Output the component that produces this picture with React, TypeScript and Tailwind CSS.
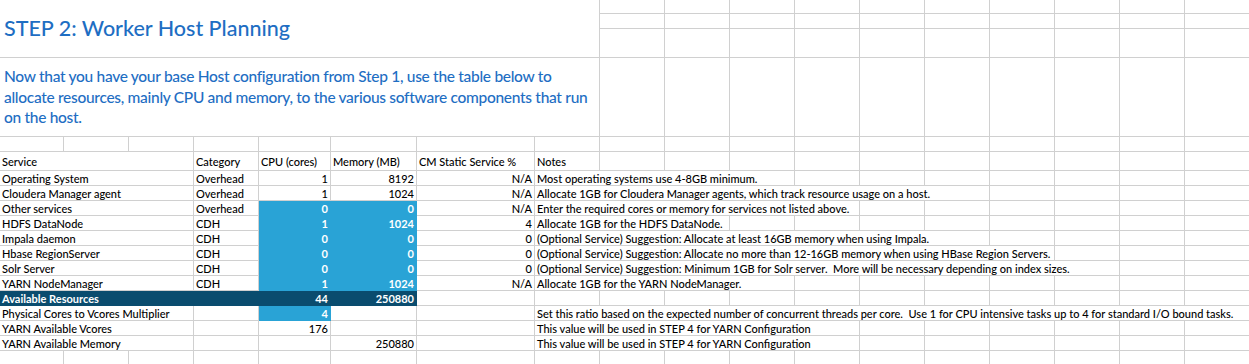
import React from "react";

const GRID = "border-[#d0d0d0]";
const FONT = { fontFamily: "Lato, 'Open Sans', sans-serif" };

const SPAN: Record<number, string> = {
  1: "col-span-1",
  2: "col-span-2",
  3: "col-span-3",
  4: "col-span-4",
  5: "col-span-5",
  6: "col-span-6",
  7: "col-span-7",
  8: "col-span-8",
  9: "col-span-9",
  10: "col-span-10",
  11: "col-span-11",
  12: "col-span-12",
};

type Cell = {
  span?: number;
  text?: string;
  right?: boolean;
  fill?: "blue" | "dark";
};

const TOTAL = 18;

function fillRow(cells: Cell[]): Cell[] {
  const used = cells.reduce((s, c) => s + (c.span ?? 1), 0);
  const out = [...cells];
  for (let i = used; i < TOTAL; i++) out.push({});
  return out;
}

type Row = { cells: Cell[] };

const b = (text: string): Cell => ({ text, right: true, fill: "blue" });

const rows: Row[] = [
  { cells: [{}, {}, {}] },
  {
    cells: [
      { span: 3, text: "Service" },
      { text: "Category" },
      { text: "CPU (cores)" },
      { text: "Memory (MB)" },
      { text: "CM Static Service %" },
      { text: "Notes" },
    ],
  },
  {
    cells: [
      { span: 3, text: "Operating System" },
      { text: "Overhead" },
      { text: "1", right: true },
      { text: "8192", right: true },
      { text: "N/A", right: true },
      { span: 4, text: "Most operating systems use 4-8GB minimum." },
    ],
  },
  {
    cells: [
      { span: 3, text: "Cloudera Manager agent" },
      { text: "Overhead" },
      { text: "1", right: true },
      { text: "1024", right: true },
      { text: "N/A", right: true },
      { span: 7, text: "Allocate 1GB for Cloudera Manager agents, which track resource usage on a host." },
    ],
  },
  {
    cells: [
      { span: 3, text: "Other services" },
      { text: "Overhead" },
      b("0"),
      b("0"),
      { text: "N/A", right: true },
      { span: 5, text: "Enter the required cores or memory for services not listed above." },
    ],
  },
  {
    cells: [
      { span: 3, text: "HDFS DataNode" },
      { text: "CDH" },
      b("1"),
      b("1024"),
      { text: "4", right: true },
      { span: 3, text: "Allocate 1GB for the HDFS DataNode." },
    ],
  },
  {
    cells: [
      { span: 3, text: "Impala daemon" },
      { text: "CDH" },
      b("0"),
      b("0"),
      { text: "0", right: true },
      { span: 7, text: "(Optional Service) Suggestion: Allocate at least 16GB memory when using Impala." },
    ],
  },
  {
    cells: [
      { span: 3, text: "Hbase RegionServer" },
      { text: "CDH" },
      b("0"),
      b("0"),
      { text: "0", right: true },
      { span: 8, text: "(Optional Service) Suggestion: Allocate no more than 12-16GB memory when using HBase Region Servers." },
    ],
  },
  {
    cells: [
      { span: 3, text: "Solr Server" },
      { text: "CDH" },
      b("0"),
      b("0"),
      { text: "0", right: true },
      { span: 9, text: "(Optional Service) Suggestion: Minimum 1GB for Solr server.  More will be necessary depending on index sizes." },
    ],
  },
  {
    cells: [
      { span: 3, text: "YARN NodeManager" },
      { text: "CDH" },
      b("1"),
      b("1024"),
      { text: "N/A", right: true },
      { span: 4, text: "Allocate 1GB for the YARN NodeManager." },
    ],
  },
  {
    cells: [
      { span: 4, text: "Available Resources", fill: "dark" },
      { text: "44", right: true, fill: "dark" },
      { text: "250880", right: true, fill: "dark" },
      {},
    ],
  },
  {
    cells: [
      { span: 3, text: "Physical Cores to Vcores Multiplier" },
      {},
      b("4"),
      {},
      {},
      { span: 11, text: "Set this ratio based on the expected number of concurrent threads per core.  Use 1 for CPU intensive tasks up to 4 for standard I/O bound tasks." },
    ],
  },
  {
    cells: [
      { span: 3, text: "YARN Available Vcores" },
      {},
      { text: "176", right: true },
      {},
      {},
      { span: 5, text: "This value will be used in STEP 4 for YARN Configuration" },
    ],
  },
  {
    cells: [
      { span: 3, text: "YARN Available Memory" },
      {},
      {},
      { text: "250880", right: true },
      {},
      { span: 5, text: "This value will be used in STEP 4 for YARN Configuration" },
    ],
  },
  { cells: [] },
];

function CellView({ c }: { c: Cell }) {
  const fillCls =
    c.fill === "blue"
      ? "bg-[#29a3d6] border-transparent text-white font-bold"
      : c.fill === "dark"
      ? "bg-[#0a4c6e] border-transparent text-white font-bold"
      : `bg-white ${GRID} text-black font-medium`;
  return (
    <div
      className={`${SPAN[c.span ?? 1]} ${fillCls} border-r border-b flex items-center whitespace-pre overflow-visible px-[2px] ${
        c.right ? "justify-end" : "justify-start"
      }`}
    >
      <span>{c.text ?? ""}</span>
    </div>
  );
}

export default function App() {
  return (
    <div className="w-[1249px] h-[364px] overflow-hidden bg-white" style={FONT}>
      {/* top area */}
      <div className="flex">
        <div className="w-[600px] flex flex-col shrink-0">
          <div className={`h-[58px] border-r border-b ${GRID} flex items-start pl-[4px] pt-[14px]`}>
            <span className="text-[21.5px] leading-[28px] text-[#1e6ec3] font-medium">STEP 2: Worker Host Planning</span>
          </div>
          <div className={`h-[79px] border-r border-b ${GRID} flex items-center pl-[4px]`}>
            <p className="text-[15.5px] leading-[20.5px] text-[#1e6ec3] font-medium tracking-[-0.3px]">
              Now that you have your base Host configuration from Step 1, use the table below to
              <br />
              allocate resources, mainly CPU and memory, to the various software components that run
              <br />
              on the host.
            </p>
          </div>
        </div>
        <div className="grid grid-cols-[repeat(10,65px)] grid-rows-[14px_15px_29px_79px]">
          {Array.from({ length: 40 }).map((_, i) => (
            <div key={i} className={`border-r border-b ${GRID}`} />
          ))}
        </div>
      </div>
      {/* table area */}
      <div className="grid grid-cols-[64px_65px_65px_65px_72px_86px_118px_repeat(11,65px)] grid-rows-[15px_19px_repeat(13,15px)] text-[11px] leading-[13px]">
        {rows.map((r, ri) =>
          fillRow(r.cells).map((c, ci) => <CellView key={`${ri}-${ci}`} c={c} />)
        )}
      </div>
    </div>
  );
}
